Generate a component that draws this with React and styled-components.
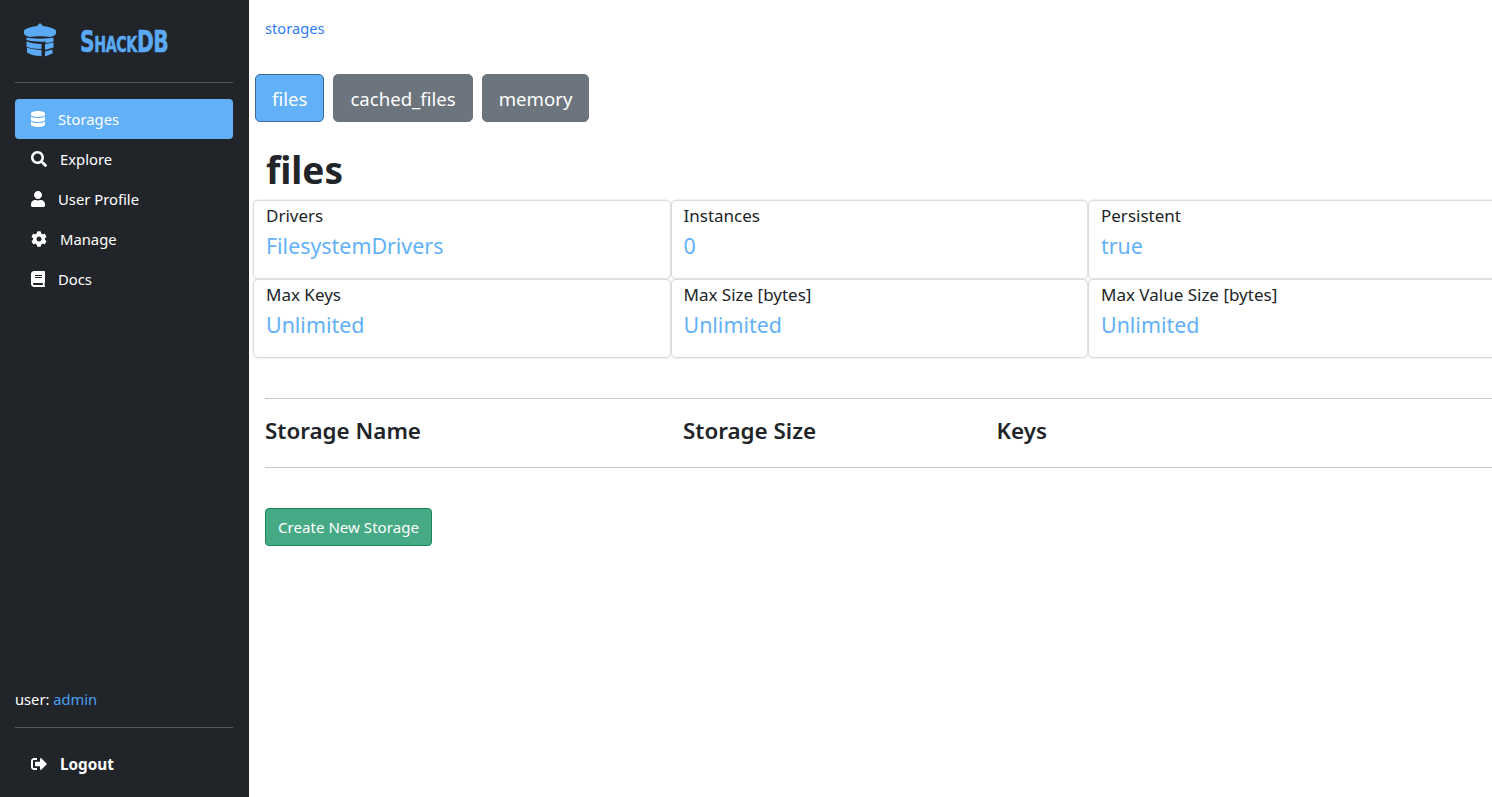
import { FaBook, FaCog, FaDatabase, FaSearch, FaSignOutAlt, FaUser } from 'react-icons/fa';
import styled, { createGlobalStyle } from 'styled-components';

const GlobalStyle = createGlobalStyle`
  html, body, #root {
    margin: 0;
    height: 100%;
  }
  body {
    font-family: 'Noto Sans', 'Open Sans', sans-serif;
    color: #212529;
    background: #fff;
    overflow: hidden;
  }
`;

const Page = styled.div`
  display: flex;
  height: 797px;
  overflow: hidden;
`;

const Sidebar = styled.aside`
  width: 249px;
  flex-shrink: 0;
  box-sizing: border-box;
  padding: 0 16px 0 15px;
  background: #212529;
  color: #fff;
  display: flex;
  flex-direction: column;
`;

const Brand = styled.div`
  height: 82px;
  padding-left: 7px;
  display: flex;
  align-items: center;
  gap: 22px;
`;

const BrandName = styled.span`
  display: inline-block;
  font-family: 'DejaVu Sans Condensed', 'DejaVu Sans', sans-serif;
  font-variant: small-caps;
  font-weight: 700;
  font-size: 30px;
  letter-spacing: -0.5px;
  color: #5aaaf6;
  -webkit-text-stroke: 0.5px #5aaaf6;
  transform: scaleX(0.75);
  transform-origin: left center;
`;

const Divider = styled.hr`
  width: 100%;
  height: 1px;
  margin: 0;
  border: 0;
  background: #55585c;
`;

const Nav = styled.nav`
  margin-top: 16px;
  display: flex;
  flex-direction: column;
  flex: 1;
`;

const NavItem = styled.a`
  height: 40px;
  padding-left: 16px;
  display: flex;
  align-items: center;
  gap: 13px;
  border-radius: 4px;
  color: #fff;
  font-size: ${(props) => (props.$bold ? '15.3px' : '14.8px')};
  font-weight: ${(props) => (props.$bold ? 700 : 400)};
  background: ${(props) => (props.$active ? '#61b0f8' : 'transparent')};
`;

const IconSlot = styled.span`
  width: ${(props) => (props.$wide ? '16px' : '14px')};
  height: 16px;
  display: flex;
  justify-content: center;

  svg {
    flex-shrink: 0;
  }
`;

const UserLine = styled.div`
  height: 24px;
  margin-bottom: 16px;
  font-size: 14.7px;
  line-height: 24px;

  a {
    color: #4a9ff0;
  }
`;

const LogoutWrap = styled.div`
  height: 69px;
  padding-top: 2px;
  box-sizing: border-box;
  display: flex;
  flex-direction: column;
  justify-content: center;
`;

const Main = styled.main`
  flex: 1;
  min-width: 0;
  overflow: hidden;
`;

const Crumb = styled.a`
  display: block;
  height: 74px;
  box-sizing: border-box;
  padding: 18px 0 0 16px;
  font-size: 14.7px;
  line-height: 20px;
  color: #2f7cf6;
`;

const Tabs = styled.div`
  display: flex;
  gap: 9px;
  padding-left: 6px;
`;

const Tab = styled.button`
  height: 48px;
  padding: 0 16px;
  font: inherit;
  font-size: 18.6px;
  color: #fff;
  border-radius: 5px;
  border: 1px solid ${(props) => (props.$active ? '#3f6a94' : '#6c757d')};
  background: ${(props) => (props.$active ? '#61b0f8' : '#6c757d')};
`;

const Title = styled.h1`
  margin: 24px 0 0 17px;
  height: 54px;
  font-size: 37px;
  line-height: 48px;
  font-weight: 700;
`;

const StatGrid = styled.div`
  display: grid;
  grid-template-columns: repeat(3, 417.5px);
  grid-auto-rows: 79px;
  margin-left: 4px;
`;

const Stat = styled.div`
  box-sizing: border-box;
  padding: 3px 12px;
  border: 1px solid #dcdcdc;
  border-radius: 5px;
  box-shadow: 0 0 0 0.5px #e4e4e4;
`;

const StatLabel = styled.div`
  font-size: 17px;
  line-height: 24px;
`;

const StatValue = styled.div`
  font-size: 21.4px;
  line-height: 36px;
  color: #63b1f8;
`;

const Table = styled.div`
  margin: 40px 0 0 16px;
  height: 68px;
  border-top: 1px solid #c8c8c8;
  border-bottom: 1px solid #c8c8c8;
  display: grid;
  grid-template-columns: 418px 313.500px 1fr;
  align-items: center;
`;

const HeadCell = styled.div`
  margin-bottom: 6px;
  font-size: 22.4px;
  font-weight: 600;
`;

const CreateButton = styled.button`
  display: block;
  margin: 40px 0 0 16px;
  height: 38px;
  width: 167px;
  padding: 0;
  font: inherit;
  font-size: 15.1px;
  color: #fff;
  background: #45aa85;
  border: 1px solid #198754;
  border-radius: 4px;
`;

const Logo = () => (
  <svg width="36" height="36" viewBox="0 0 36 36" fill="#5aaaf6">
    <path d="M18 0l3 3c4 .5 9 1.500 12 3.500 1.500 1 1.500 4 .5 5-1 1-3 2-5 2.500-6-1-15-1-21 0-2-.5-4-1.500-5-2.500-1-1-1-4 .5-5 3-2 8-3 12-3.500z" />
    <path d="M4.500 14.500c6 1.500 21 1.500 27 0v4c-2 .7-5 1.200-8 1.500v-1.500c-6 .5-13 0-19-1.500z" />
    <path d="M4.500 18.500c4 1.500 9 2.200 15 2.500v5c-6 0-11-.7-15-2.500z" />
    <path d="M5 24.500c4 1.500 9 2.500 14.500 2.500v6c-6 0-11-1-14.500-3.500z" />
    <path d="M23 21l8.500-1.500v5L23 27zM23 28.500l7.500-2v4L23 33.500z" />
  </svg>
);

const navLinks = [
  { label: 'Storages', icon: FaDatabase, active: true },
  { label: 'Explore', icon: FaSearch, wide: true },
  { label: 'User Profile', icon: FaUser },
  { label: 'Manage', icon: FaCog, wide: true },
  { label: 'Docs', icon: FaBook },
];

const stats = [
  ['Drivers', 'FilesystemDrivers'],
  ['Instances', '0'],
  ['Persistent', 'true'],
  ['Max Keys', 'Unlimited'],
  ['Max Size [bytes]', 'Unlimited'],
  ['Max Value Size [bytes]', 'Unlimited'],
];

const App = () => {
  return (
    <Page>
      <GlobalStyle />
      <Sidebar>
        <Brand>
          <Logo />
          <BrandName>ShackDB</BrandName>
        </Brand>
        <Divider />
        <Nav>
          {navLinks.map(({ label, icon: Icon, active, wide }) => (
            <NavItem key={label} $active={active}>
              <IconSlot $wide={wide}>
                <Icon size={16} />
              </IconSlot>
              {label}
            </NavItem>
          ))}
        </Nav>
        <UserLine>
          user: <a>admin</a>
        </UserLine>
        <Divider />
        <LogoutWrap>
          <NavItem $bold>
            <IconSlot $wide>
              <FaSignOutAlt size={16} />
            </IconSlot>
            Logout
          </NavItem>
        </LogoutWrap>
      </Sidebar>
      <Main>
        <Crumb>storages</Crumb>
        <Tabs>
          <Tab $active>files</Tab>
          <Tab>cached_files</Tab>
          <Tab>memory</Tab>
        </Tabs>
        <Title>files</Title>
        <StatGrid>
          {stats.map(([label, value]) => (
            <Stat key={label}>
              <StatLabel>{label}</StatLabel>
              <StatValue>{value}</StatValue>
            </Stat>
          ))}
        </StatGrid>
        <Table>
          <HeadCell>Storage Name</HeadCell>
          <HeadCell>Storage Size</HeadCell>
          <HeadCell>Keys</HeadCell>
        </Table>
        <CreateButton>Create New Storage</CreateButton>
      </Main>
    </Page>
  );
};

export default App;
